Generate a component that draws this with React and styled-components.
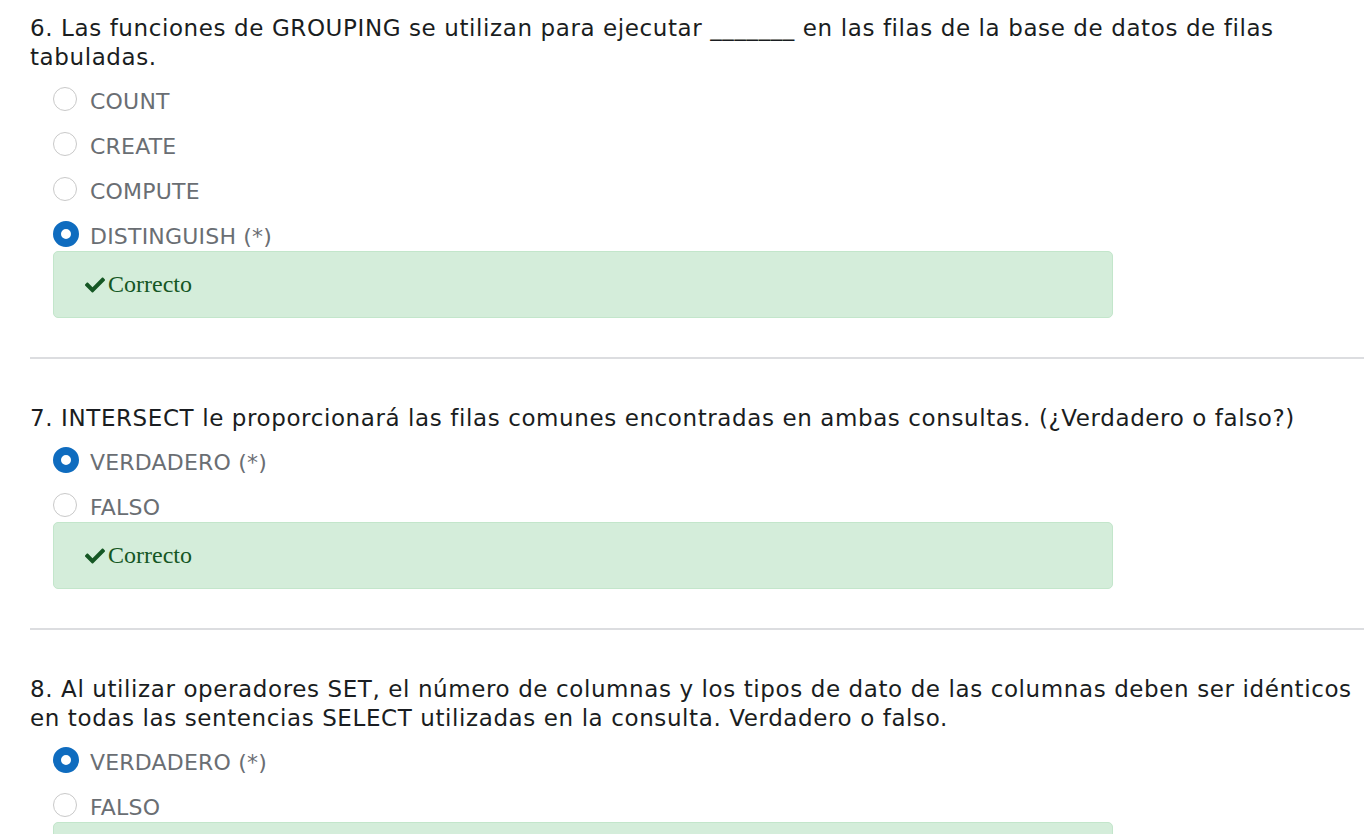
import React from 'react';
import styled, { createGlobalStyle } from 'styled-components';
import { FaCheck } from 'react-icons/fa';

const GlobalStyle = createGlobalStyle`
  html, body {
    margin: 0;
    padding: 0;
    background: #ffffff;
    overflow: hidden;
  }
`;

const questions = [
  {
    num: 6,
    text: 'Las funciones de GROUPING se utilizan para ejecutar _______ en las filas de la base de datos de filas tabuladas.',
    options: ['COUNT', 'CREATE', 'COMPUTE', 'DISTINGUISH (*)'],
    selected: 3,
  },
  {
    num: 7,
    text: 'INTERSECT le proporcionará las filas comunes encontradas en ambas consultas. (¿Verdadero o falso?)',
    options: ['VERDADERO (*)', 'FALSO'],
    selected: 0,
  },
  {
    num: 8,
    text: 'Al utilizar operadores SET, el número de columnas y los tipos de dato de las columnas deben ser idénticos en todas las sentencias SELECT utilizadas en la consulta. Verdadero o falso.',
    options: ['VERDADERO (*)', 'FALSO'],
    selected: 0,
  },
];

export default function App() {
  return (
    <>
      <GlobalStyle />
      <Page>
        {questions.map((q, i) => (
          <React.Fragment key={q.num}>
            {i > 0 && <Divider />}
            <Question>
              <QuestionText>{q.num}. {q.text}</QuestionText>
              <Options>
                {q.options.map((opt, j) => (
                  <Option key={opt}>
                    <Radio $checked={j === q.selected} />
                    <OptionLabel>{opt}</OptionLabel>
                  </Option>
                ))}
              </Options>
              <Feedback>
                <FaCheck size={20} />
                <span>Correcto</span>
              </Feedback>
            </Question>
          </React.Fragment>
        ))}
      </Page>
    </>
  );
}

const Page = styled.div`
  padding: 14px 0 0 30px;
  font-family: "DejaVu Sans", Verdana, sans-serif;
`;

const Question = styled.div`
  display: flex;
  flex-direction: column;
`;

const QuestionText = styled.div`
  font-size: 23px;
  line-height: 29px;
  letter-spacing: 0.6px;
  color: #1a1d21;
  padding-right: 10px;
  margin-bottom: 15px;
`;

const Options = styled.div`
  display: flex;
  flex-direction: column;
  gap: 16px;
  margin-left: 23px;
`;

const Option = styled.div`
  display: flex;
  align-items: center;
  height: 29px;
`;

const Radio = styled.span`
  box-sizing: border-box;
  flex: none;
  width: ${p => (p.$checked ? '26px' : '24px')};
  height: ${p => (p.$checked ? '26px' : '24px')};
  margin: ${p => (p.$checked ? '0 11px 5px 0' : '0 13px 5px 0')};
  border-radius: 50%;
  background: #ffffff;
  border: ${p => (p.$checked ? '8px solid #0f6cbf' : '1px solid #c9c9c9')};
`;

const OptionLabel = styled.span`
  font-size: 22px;
  line-height: 29px;
  letter-spacing: 0.2px;
  color: #6a6e73;
`;

const Feedback = styled.div`
  width: 1060px;
  box-sizing: border-box;
  display: flex;
  align-items: center;
  gap: 3px;
  padding: 18px 31px;
  margin-left: 23px;
  background: #d4edda;
  border: 1px solid #c3e6cb;
  border-radius: 5px;
  color: #155724;
  font-family: "Liberation Serif", "Times New Roman", serif;
  font-size: 24px;
  line-height: 29px;
`;

const Divider = styled.hr`
  margin: 39px 0 45px 0;
  border: none;
  border-top: 2px solid #dcdde0;
  height: 0;
`;
